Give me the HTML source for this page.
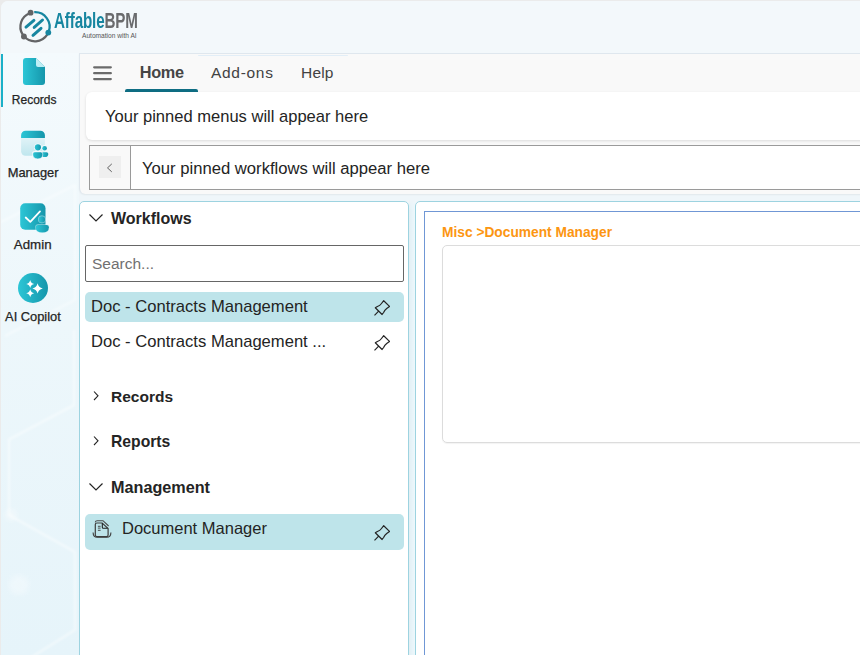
<!DOCTYPE html>
<html><head><meta charset="utf-8">
<style>
*{box-sizing:border-box;margin:0;padding:0}
html,body{width:860px;height:655px;overflow:hidden}
body{position:relative;background:#ebebeb;font-family:"Liberation Sans",sans-serif;color:#242424}
.abs{position:absolute}
#topbar{left:1px;top:1px;width:860px;height:52px;background:#f3f8fb;border-top-left-radius:7px}
#side{left:1px;top:53px;width:78px;height:602px;background:linear-gradient(180deg,#f4fafd 0%,#edf7fb 45%,#e6f4fa 100%)}
.navlbl{position:absolute;width:100px;text-align:center;font-size:12.5px;color:#242424;white-space:nowrap;-webkit-text-stroke:0.25px #242424}
#hdr{left:79px;top:53px;width:800px;height:141px;background:#f9f9f9;border-left:1px solid #dfe7ee;border-top:1px solid #dfe7ee;border-bottom-left-radius:6px;box-shadow:0 1px 2px rgba(0,0,0,.06)}
.tab{position:absolute;top:63.5px;font-size:16px;color:#424242;white-space:nowrap}
#pm{left:86px;top:92px;width:800px;height:48px;background:#fff;border-radius:6px;box-shadow:0 1px 3px rgba(0,0,0,.12)}
#pw{left:89px;top:145px;width:800px;height:45px;background:#fff;border:1px solid #9a9a9a;border-right:none}
#wf{left:79px;top:201px;width:330px;height:470px;background:#fff;border:1px solid #9dd3e0;border-radius:5px}
#rp{left:415px;top:201px;width:470px;height:470px;background:#fff;border:1px solid #9dd3e0;border-radius:5px}
.sec{position:absolute;left:111px;font-size:16px;font-weight:bold;color:#242424;white-space:nowrap}
.item{position:absolute;left:85px;width:319px;border-radius:5px}
.itxt{position:absolute;font-size:16.6px;color:#242424;white-space:nowrap}
</style></head><body>
<div class="abs" style="left:1px;top:1px;width:870px;height:670px;background:#eff6fa;border-top-left-radius:7px"></div>
<div id="topbar" class="abs"></div>
<div id="side" class="abs"></div>
<svg class="abs" style="left:1px;top:53px" width="78" height="602" viewBox="0 53 78 602">
  <defs><filter id="bl"><feGaussianBlur stdDeviation="0.8"/></filter></defs><path filter="url(#bl)" d="M73 330 V405 L8 439.5 V515 L74 552 V630 L26 660" fill="none" stroke="#ffffff" stroke-opacity=".45" stroke-width="2.2"/>
  <circle cx="10" cy="515" r="6" fill="#fff" opacity=".35" filter="url(#bl2)"/><circle cx="18" cy="585" r="10" fill="#fff" opacity=".3" filter="url(#bl2)"/><defs><filter id="bl2"><feGaussianBlur stdDeviation="2.5"/></filter></defs>
  <path filter="url(#bl)" d="M0 222 L74 185 V300 L4 336" fill="none" stroke="#ffffff" stroke-opacity=".4" stroke-width="2"/>
</svg>

<!-- logo -->
<svg class="abs" style="left:15px;top:6px" width="40" height="40" viewBox="0 0 40 40">
  <path d="M19.24 6.17 A14.6 14.6 0 0 1 33.72 25.74" fill="none" stroke="#1786a0" stroke-width="2.3"/>
  <path d="M32.24 28.7 A14.6 14.6 0 0 1 8.98 30.33" fill="none" stroke="#636466" stroke-width="2.3"/>
  <path d="M7.62 28.49 A14.6 14.6 0 0 1 14.53 7.21" fill="none" stroke="#636466" stroke-width="2.3"/>
  <circle cx="15.6" cy="6.7" r="2.9" fill="#636466"/>
  <circle cx="8.9" cy="30.5" r="2.9" fill="#636466"/>
  <circle cx="33.3" cy="26.6" r="2.9" fill="#1786a0"/>
  <path d="M11 21.1 L18.9 14.4 M19.2 21.4 L27.5 14 M18 29.3 L26 22.3" stroke="#1786a0" stroke-width="3" stroke-linecap="round"/>
</svg>
<div class="abs" style="left:53.5px;top:8.3px;font-size:22px;font-weight:bold;white-space:nowrap;transform:scaleX(.69);transform-origin:0 0;letter-spacing:-0.2px"><span style="color:#1786a0">Affable</span><span style="color:#6a6b6d">BPM</span></div>
<div class="abs" style="left:82px;top:32.2px;font-size:6.6px;color:#555;white-space:nowrap">Automation with AI</div>

<!-- sidebar -->
<div class="abs" style="left:1px;top:54px;width:2px;height:53px;background:#1bb0c8"></div>
<svg class="abs" style="left:23px;top:58px" width="22" height="27" viewBox="0 0 22 27">
  <defs><linearGradient id="g1" x1="0" y1="0" x2="1" y2="0"><stop offset="0" stop-color="#2cc6d6"/><stop offset="1" stop-color="#1596ab"/></linearGradient></defs>
  <path d="M3 0 H13 L22 9 V24 A3 3 0 0 1 19 27 H3 A3 3 0 0 1 0 24 V3 A3 3 0 0 1 3 0Z" fill="url(#g1)"/>
  <path d="M13 0 L22 9 H15 A2 2 0 0 1 13 7Z" fill="#bdeef5"/>
</svg>
<div class="navlbl" style="left:-15.85px;top:92.9px;font-size:12px">Records</div>

<svg class="abs" style="left:20px;top:130px" width="30" height="30" viewBox="0 0 30 30">
  <defs><linearGradient id="g2" x1="0" y1="0" x2="0" y2="1"><stop offset="0" stop-color="#eef8fb"/><stop offset="1" stop-color="#bfe6ee"/></linearGradient>
  <linearGradient id="g3" x1="0" y1="0" x2="1" y2="0"><stop offset="0" stop-color="#2cc6d6"/><stop offset="1" stop-color="#1596ab"/></linearGradient></defs>
  <rect x="1.1" y="0.8" width="23.8" height="25" rx="4.5" fill="url(#g2)"/>
  <path d="M1.1 5.3 A4.5 4.5 0 0 1 5.6 0.8 H20.4 A4.5 4.5 0 0 1 24.9 5.3 V8.1 H1.1Z" fill="url(#g3)"/>
  <g fill="#f2f9fc" stroke="#f2f9fc" stroke-width="1.6">
  <circle cx="24.6" cy="18.2" r="2.3"/><circle cx="17.9" cy="17.3" r="3.1"/>
  <path d="M12.7 24 Q12.7 21.9 14.8 21.9 H20.7 Q22.8 21.9 22.8 24 Q22.8 28.9 17.75 28.9 Q12.7 28.9 12.7 24Z"/>
  <path d="M21.3 24 Q21.3 22.2 23.1 22.2 H26.5 Q28.3 22.2 28.3 24 Q28.3 27.1 24.8 27.1 Q21.3 27.1 21.3 24Z"/>
  </g>
  <circle cx="24.6" cy="18.2" r="2.3" fill="url(#g3)"/>
  <path d="M21.3 24 Q21.3 22.2 23.1 22.2 H26.5 Q28.3 22.2 28.3 24 Q28.3 27.1 24.8 27.1 Q21.3 27.1 21.3 24Z" fill="url(#g3)"/>
  <circle cx="17.9" cy="17.3" r="3.1" fill="url(#g3)"/>
  <path d="M12.7 24 Q12.7 21.9 14.8 21.9 H20.7 Q22.8 21.9 22.8 24 Q22.8 28.9 17.75 28.9 Q12.7 28.9 12.7 24Z" fill="url(#g3)" stroke="#f2f9fc" stroke-width="0.6"/>
</svg>
<div class="navlbl" style="left:-16.85px;top:165.3px;font-size:12.9px">Manager</div>

<svg class="abs" style="left:19px;top:202px" width="32" height="32" viewBox="0 0 32 32">
  <rect x="1.2" y="1.2" width="25.3" height="26.6" rx="5" fill="url(#g3)"/>
  <path d="M6.7 15.5 L11.3 19.8 L21 9.4" fill="none" stroke="#fff" stroke-width="1.8" stroke-linecap="round" stroke-linejoin="round"/>
  <g fill="#d8f2f7" stroke="#d8f2f7" stroke-width="1.2" opacity=".6">
    <circle cx="22.9" cy="17.4" r="3.2"/>
    <path d="M16.8 25.2 Q16.8 22.9 19.1 22.9 H27.6 Q29.9 22.9 29.9 25.2 Q29.9 30.5 23.35 30.5 Q16.8 30.5 16.8 25.2Z"/>
  </g>
  <circle cx="22.9" cy="17.4" r="3.2" fill="url(#g3)"/>
  <path d="M16.8 25.2 Q16.8 22.9 19.1 22.9 H27.6 Q29.9 22.9 29.9 25.2 Q29.9 30.5 23.35 30.5 Q16.8 30.5 16.8 25.2Z" fill="url(#g3)"/>
</svg>
<div class="navlbl" style="left:-17.3px;top:237px;font-size:13.3px">Admin</div>

<svg class="abs" style="left:18px;top:273px" width="30" height="30" viewBox="0 0 30 30">
  <circle cx="15" cy="15" r="15" fill="url(#g3)"/>
  <path d="M19.60 10.20 Q20.54 14.46 24.80 15.40 Q20.54 16.34 19.60 20.60 Q18.66 16.34 14.40 15.40 Q18.66 14.46 19.60 10.20Z M12.20 7.00 Q12.92 10.28 16.20 11.00 Q12.92 11.72 12.20 15.00 Q11.48 11.72 8.20 11.00 Q11.48 10.28 12.20 7.00Z M12.20 16.20 Q12.92 19.48 16.20 20.20 Q12.92 20.92 12.20 24.20 Q11.48 20.92 8.20 20.20 Q11.48 19.48 12.20 16.20Z" fill="#fff"/>
</svg>
<div class="navlbl" style="left:-17.05px;top:309.4px;font-size:12.85px">AI Copilot</div>

<!-- header -->
<div id="hdr" class="abs"></div>
<div class="abs" style="left:198px;top:55px;width:150px;height:1px;background:#e2eef7;border-radius:1px"></div>
<svg class="abs" style="left:93px;top:66px" width="20" height="15" viewBox="0 0 20 15">
  <path d="M1.2 1.3 H17.8 M1.2 7.2 H17.8 M1.2 13.1 H17.8" stroke="#6b6b6b" stroke-width="2.3" stroke-linecap="round"/>
</svg>
<div class="tab" style="left:139.7px;top:63.4px;font-weight:bold;font-size:16.3px;letter-spacing:-.3px;color:#454545">Home</div>
<div class="abs" style="left:125px;top:89px;width:73px;height:3px;background:#0f6e84;border-radius:2px 2px 0 0"></div>
<div class="tab" style="left:211px;top:64.2px;font-size:15.5px;letter-spacing:.7px">Add-ons</div>
<div class="tab" style="left:301px;top:64.2px;font-size:15.5px;letter-spacing:.2px">Help</div>

<div id="pm" class="abs"></div>
<div class="abs" style="left:105px;top:107.4px;font-size:16.55px;color:#242424;white-space:nowrap">Your pinned menus will appear here</div>

<div id="pw" class="abs"></div>
<div class="abs" style="left:90px;top:146px;width:41px;height:43px;background:#f9f9f9;border-right:1px solid #9a9a9a"></div>
<div class="abs" style="left:99px;top:156px;width:22px;height:22px;background:#efefef"></div>
<svg class="abs" style="left:105px;top:162px" width="9" height="12" viewBox="0 0 9 12"><path d="M6.8 1.9 L2.5 5.9 L6.8 9.9" fill="none" stroke="#5a5a5a" stroke-width="0.95"/></svg>
<div class="abs" style="left:142px;top:159px;font-size:16.65px;color:#242424;white-space:nowrap">Your pinned workflows will appear here</div>

<!-- workflows panel -->
<div class="abs" style="left:409px;top:200px;width:6px;height:470px;background:linear-gradient(90deg,#e3eff3,#e6f3f8 40%,#edf8fc);-webkit-mask-image:linear-gradient(180deg,transparent 0,#000 10px);mask-image:linear-gradient(180deg,transparent 0,#000 10px)"></div>
<div id="wf" class="abs"></div>
<svg class="abs" style="left:88px;top:212px" width="16" height="12" viewBox="0 0 16 12"><path d="M1.5 2.5 L8 9 L14.5 2.5" fill="none" stroke="#242424" stroke-width="1.2"/></svg>
<div class="sec" style="top:210.2px">Workflows</div>
<div class="abs" style="left:85px;top:245px;width:319px;height:37px;border:1px solid #666;border-radius:2px;background:#fff"></div>
<div class="abs" style="left:92px;top:254.8px;font-size:15.5px;color:#707070;white-space:nowrap">Search...</div>

<div class="item" style="top:292px;height:30px;background:#bee4ea"></div>
<div class="itxt" style="left:91px;top:297px">Doc - Contracts Management</div>
<div class="itxt" style="left:91px;top:332.3px">Doc - Contracts Management ...</div>

<svg class="abs pin" style="left:374px;top:300px" width="16" height="16" viewBox="0 0 16 16"><path d="M9.7 0.7 L15.5 6.4 L12.7 8.5 Q10.5 10.1 9.6 12.5 L8.1 14.5 L1.3 7.8 L3.4 6.5 Q5.9 5.6 7.5 3.5 Z M4.4 11.4 L0.5 15.3" fill="none" stroke="#242424" stroke-width="1.2" stroke-linejoin="round"/></svg>
<svg class="abs pin" style="left:374px;top:335px" width="16" height="16" viewBox="0 0 16 16"><path d="M9.7 0.7 L15.5 6.4 L12.7 8.5 Q10.5 10.1 9.6 12.5 L8.1 14.5 L1.3 7.8 L3.4 6.5 Q5.9 5.6 7.5 3.5 Z M4.4 11.4 L0.5 15.3" fill="none" stroke="#242424" stroke-width="1.2" stroke-linejoin="round"/></svg>

<svg class="abs" style="left:92px;top:390px" width="8" height="12" viewBox="0 0 8 12"><path d="M2 1.5 L6 5.8 L2 10" fill="none" stroke="#242424" stroke-width="1.1"/></svg>
<div class="sec" style="top:388px;font-size:15.5px">Records</div>
<svg class="abs" style="left:92px;top:435px" width="8" height="12" viewBox="0 0 8 12"><path d="M2 1.5 L6 5.8 L2 10" fill="none" stroke="#242424" stroke-width="1.1"/></svg>
<div class="sec" style="top:432.8px;font-size:15.7px">Reports</div>
<svg class="abs" style="left:88px;top:481px" width="16" height="12" viewBox="0 0 16 12"><path d="M1.5 2.5 L8 9 L14.5 2.5" fill="none" stroke="#242424" stroke-width="1.2"/></svg>
<div class="sec" style="top:478.3px;font-size:16.2px">Management</div>

<div class="item" style="top:514px;height:36px;background:#bee4ea"></div>
<svg class="abs" style="left:88px;top:512px" width="30" height="30" viewBox="0 0 30 30">
  <path d="M7.2 10.4 Q7.6 8.8 9.2 8.7 H15 L20.6 14" fill="none" stroke="#4a4a4a" stroke-width="1.1"/>
  <path d="M8.9 11 H14.2 L20.1 16.6 V23 A1.6 1.6 0 0 1 18.5 24.6 H8.9 A1.6 1.6 0 0 1 7.3 23 V12.6 A1.6 1.6 0 0 1 8.9 11Z" fill="none" stroke="#3e3e3e" stroke-width="1.2"/>
  <path d="M14.3 11.3 V15.2 Q14.3 16.3 15.4 16.3 H19.6" fill="none" stroke="#1e1e1e" stroke-width="1.1"/>
  <path d="M9.9 14.3 H12.6 M9.9 16.1 H12.6 M9.9 18.3 H12.6" stroke="#3a3a3a" stroke-width="0.9"/>
  <path d="M5.1 20.5 Q5.1 25.3 9.3 25.3 H18.8 Q22.9 25.3 22.9 20.5" fill="none" stroke="#3e3e3e" stroke-width="1.1"/>
</svg>
<div class="itxt" style="left:122px;top:519.1px;font-size:16.5px">Document Manager</div>
<svg class="abs pin" style="left:374px;top:525px" width="16" height="16" viewBox="0 0 16 16"><path d="M9.7 0.7 L15.5 6.4 L12.7 8.5 Q10.5 10.1 9.6 12.5 L8.1 14.5 L1.3 7.8 L3.4 6.5 Q5.9 5.6 7.5 3.5 Z M4.4 11.4 L0.5 15.3" fill="none" stroke="#242424" stroke-width="1.2" stroke-linejoin="round"/></svg>

<!-- right panel -->
<div id="rp" class="abs"></div>
<div class="abs" style="left:424px;top:211px;width:500px;height:500px;border-left:1px solid #7097d5;border-top:1px solid #7097d5"></div>
<div class="abs" style="left:442px;top:224.6px;font-size:13.75px;font-weight:bold;color:#fc9612;white-space:nowrap">Misc &gt;Document Manager</div>
<div class="abs" style="left:442px;top:245px;width:500px;height:198px;border:1px solid #dcdcdc;border-radius:5px;box-shadow:0 1px 1px rgba(0,0,0,.05)"></div>
</body></html>
